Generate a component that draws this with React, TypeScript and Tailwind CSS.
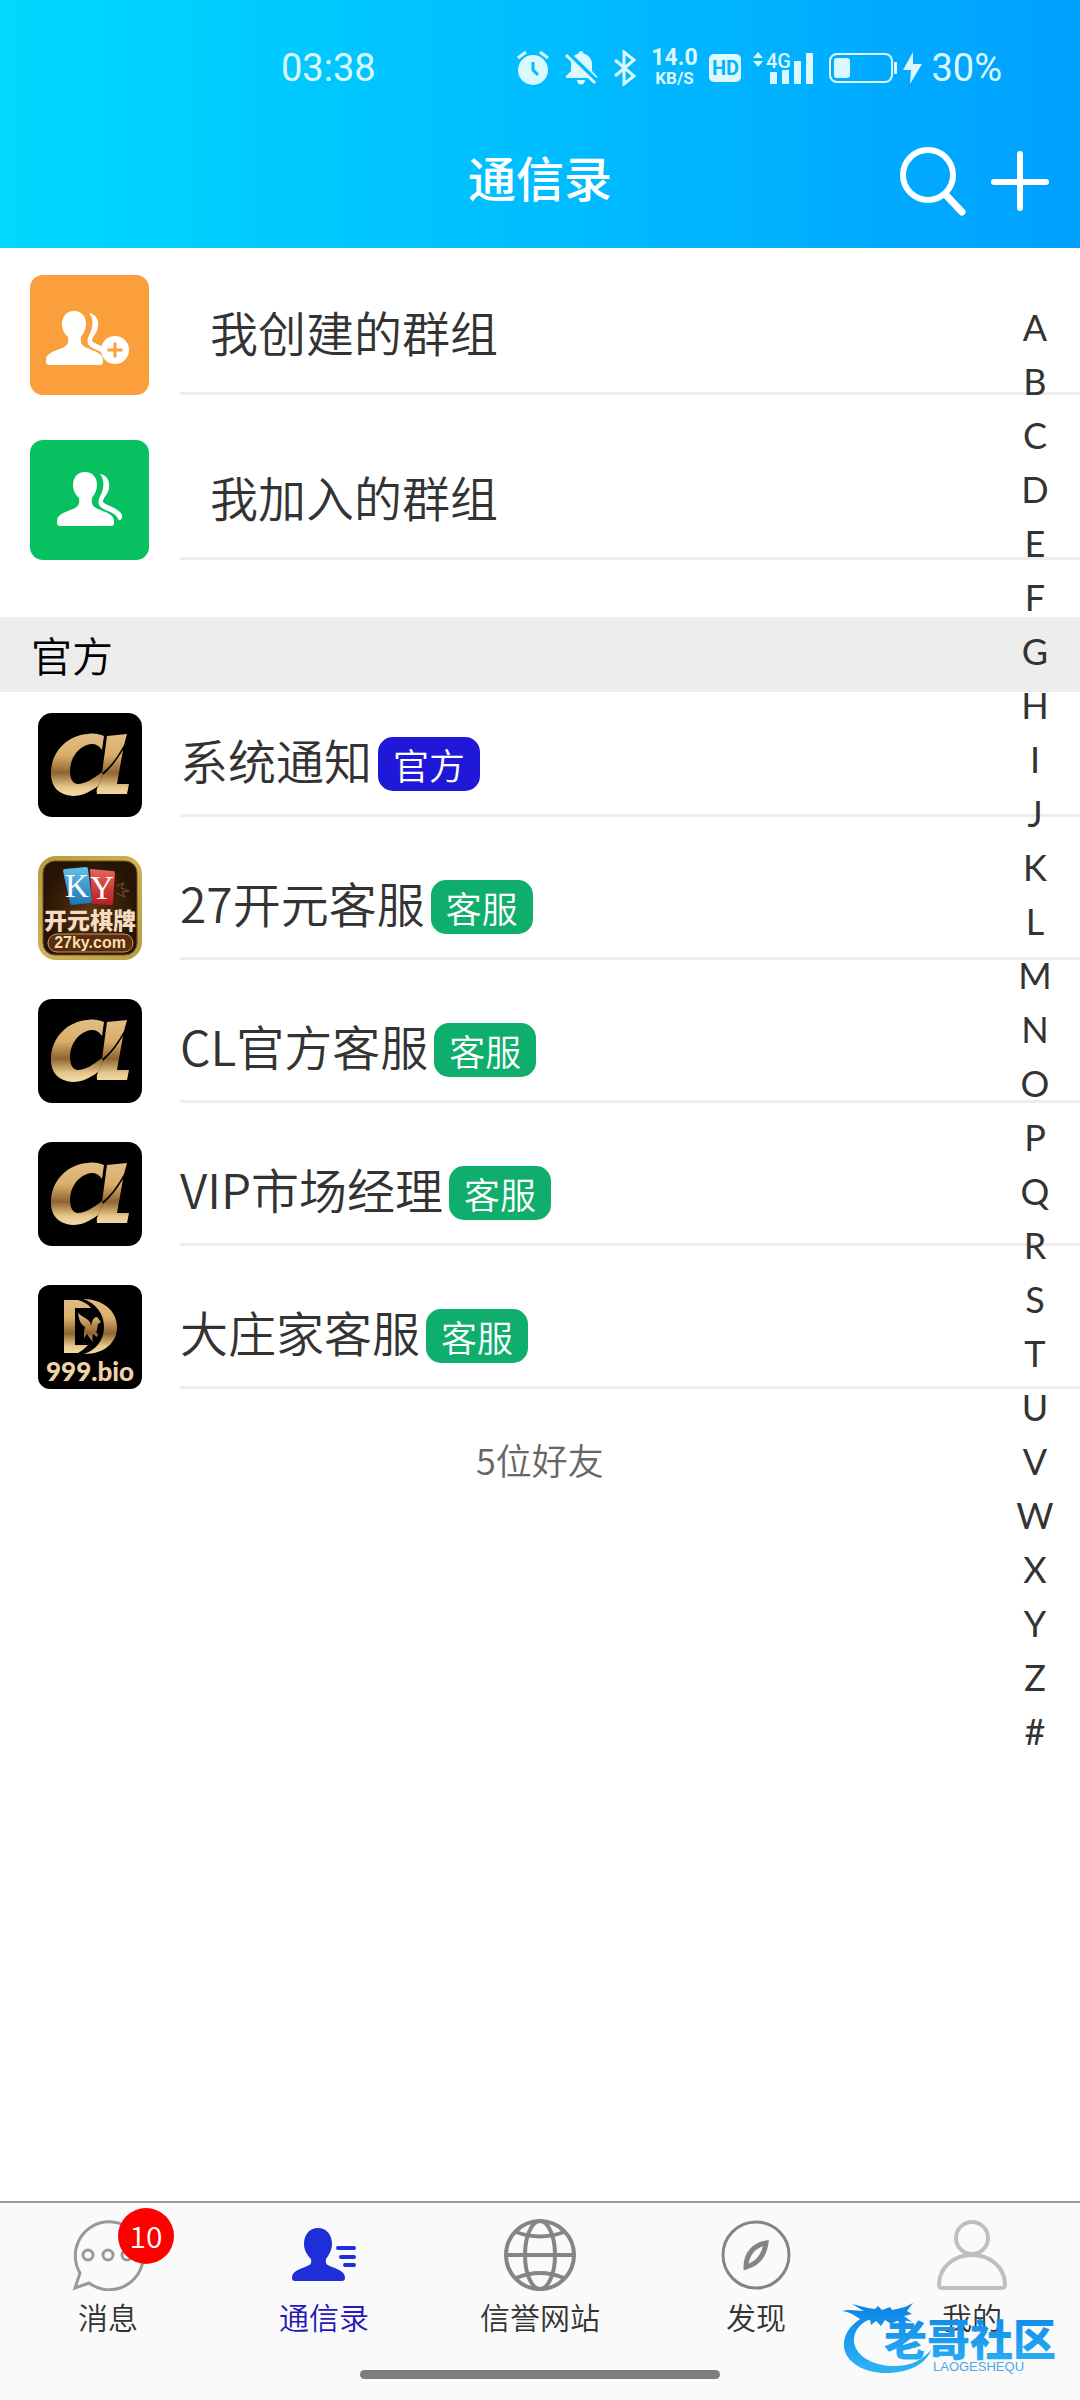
import type { ReactNode } from 'react';

const INDEX_LETTERS = 'ABCDEFGHIJKLMNOPQRSTUVWXYZ#'.split('');

interface Contact {
  id: string;
  name: string;
  tag: string;
  official?: boolean;
  avatar: ReactNode;
}

function StatusBar() {
  return (
    <div className="flex h-[136px] items-center justify-between pr-[78px] pl-[281px] font-[Roboto,sans-serif] font-normal text-[#dcf8ff]">
      <span className="text-[38px] leading-none">03:38</span>
      <div className="flex items-center gap-3">
        {/* alarm */}
        <svg width="38" height="36" viewBox="0 0 38 36" fill="none">
          <circle cx="19" cy="20" r="15" fill="currentColor" />
          <path d="M4 8l8-6M34 8l-8-6" stroke="currentColor" strokeWidth="3" />
          <path d="M19 12v8l5 5" stroke="#00bdff" strokeWidth="3" />
        </svg>
        {/* muted bell */}
        <svg width="35" height="36" viewBox="0 0 35 36" fill="none">
          <path
            d="M17 1c1.500 0 2.500 1 2.500 2.500C25 5 28 9 28 14v7l5 5v2H2v-2l5-5v-7c0-5 2-9 7.500-10.500C14.500 2 15.500 1 17 1zM13 30h8c0 3-2 4.500-4 4.500S13 33 13 30z"
            fill="currentColor"
          />
          <path d="M4 3l30 29" stroke="#00bbff" strokeWidth="4" />
          <path d="M2 5l29 28" stroke="currentColor" strokeWidth="3" />
        </svg>
        {/* bluetooth */}
        <svg width="28" height="36" viewBox="0 0 28 36" fill="none" stroke="currentColor" strokeWidth="3">
          <path d="M4 10l19 16-10 8V2l10 8L4 26" />
        </svg>
        <div className="flex w-[46px] flex-col items-center font-bold">
          <span className="text-[23px] leading-[20px]">14.0</span>
          <span className="text-[17px] leading-[20px]">KB/S</span>
        </div>
        <span className="flex h-7 w-8 items-center justify-center rounded-[5px] bg-[#dcf8ff] text-[20px] leading-none font-bold text-[#00b2ff]">
          HD
        </span>
        {/* mobile signal */}
        <svg width="62" height="36" viewBox="0 0 62 36" fill="currentColor" className="overflow-visible">
          <path d="M0 8l5-6 5 6zM0 11l5 6 5-6zM17 22h7v12h-7zM29 20h7v14h-7zM41 11h7v23h-7zM53 3h7v31h-7z" />
          <text x="13" y="18" fontSize="20" fontWeight="500">
            4G
          </text>
        </svg>
        <div className="flex items-center gap-2">
          {/* battery */}
          <svg width="96" height="36" viewBox="0 0 96 36" fill="none">
            <rect x="3" y="4" width="62" height="28" rx="7" stroke="currentColor" strokeWidth="2" />
            <rect x="7" y="8" width="16" height="20" rx="3" fill="currentColor" />
            <path d="M67 12h3v12h-3z" fill="currentColor" />
            <path d="M86 2L76 20h8l-1 14 12-20h-9z" fill="currentColor" />
          </svg>
          <span className="text-[38px] leading-none">30%</span>
        </div>
      </div>
    </div>
  );
}

function Header() {
  return (
    <header className="bg-linear-to-r from-[#00d8ff] via-[#00bdff] to-[#00a0ff] pb-6">
      <StatusBar />
      <div className="grid h-[88px] grid-cols-[1fr_auto_1fr] items-center px-7 text-white">
        <span />
        <h1 className="pb-2 text-[48px] leading-none font-medium">通信录</h1>
        <div className="flex items-center justify-end gap-4">
          <button type="button" aria-label="搜索">
            <svg width="72" height="72" viewBox="0 0 72 72" fill="none" stroke="currentColor" strokeWidth="6" strokeLinecap="round">
              <circle cx="28" cy="31" r="25" />
              <path d="M45 50l17 18" strokeWidth="7" />
            </svg>
          </button>
          <button type="button" aria-label="添加">
            <svg width="64" height="64" viewBox="0 0 64 64" fill="none" stroke="currentColor" strokeWidth="6" strokeLinecap="round">
              <path d="M32 6v54M6 34h52" />
            </svg>
          </button>
        </div>
      </div>
    </header>
  );
}

function PeopleShape() {
  return (
    <>
      <path d="M44 36c8 0 12 6 12 13 0 6-3 10-5 13-1 6 1 9 6 11 7 3 16 5 16 12v2c0 2-1 3-3 3H19c-2 0-3-1-3-3v-2c0-7 9-9 16-12 5-2 7-5 6-11-3-3-6-7-6-13 0-7 4-13 12-13z" />
      <path d="M59 38c7 1 10 7 9 14-1 7-6 9-6 14 4 4 16 6 19 13 1 4-2 7-4 4-3-8-16-8-19-14-2-6 3-10 4-17 1-6 0-10-3-14z" />
    </>
  );
}

function CreatedGroupIcon() {
  return (
    <svg width="119" height="120" viewBox="0 0 119 120" fill="#fff" className="shrink-0 rounded-[13px] bg-[#fa9f3c]">
      <PeopleShape />
      <circle cx="85" cy="75" r="14" />
      <path d="M77.500 75h15M85 67.500v15" stroke="#fa9f3c" strokeWidth="3" />
    </svg>
  );
}

function JoinedGroupIcon() {
  return (
    <svg width="119" height="120" viewBox="0 0 119 120" fill="#fff" className="shrink-0 rounded-[13px] bg-[#07c160]">
      <g transform="translate(11 -4)">
        <PeopleShape />
      </g>
    </svg>
  );
}

function GoldStops() {
  return (
    <>
      <stop offset="0" stopColor="#e2bd86" />
      <stop offset="0.350" stopColor="#d9ae6a" />
      <stop offset="0.620" stopColor="#8e6430" />
      <stop offset="0.850" stopColor="#e8c98b" />
      <stop offset="1" stopColor="#f3dfb3" />
    </>
  );
}

function AlphaAvatar({ id }: { id: string }) {
  return (
    <svg width="104" height="104" viewBox="0 0 104 104" className="shrink-0 rounded-[14px] bg-black">
      <defs>
        <linearGradient id={id} gradientUnits="userSpaceOnUse" x1="0" y1="20" x2="0" y2="84">
          <GoldStops />
        </linearGradient>
      </defs>
      <g fill={`url(#${id})`}>
        <path d="M66 23l-2 14c-4-6-9-7-15-5-11 4-17 15-17 26 0 8 3 13 8 13 7 0 15-5 24-12l1 3-5 11c-8 6-16 10-25 10-15-1-23-10-22-25 1-20 17-36 37-37 6-1 11 0 16 2z" />
        <path d="M69 23l20-2-3 11c-6 11-13 21-22 28z" />
        <path d="M85 37l-6 34h12l-2 10H59q-1-4 1-8l5-11c8-7 14-15 20-25z" />
      </g>
    </svg>
  );
}

function KaiyuanAvatar() {
  return (
    <svg width="104" height="104" viewBox="0 0 104 104" className="shrink-0 rounded-[18px]">
      <defs>
        <linearGradient id="ky-frame" x1="0" y1="0" x2="1" y2="1">
          <stop offset="0" stopColor="#b39a3c" />
          <stop offset="0.500" stopColor="#cdb257" />
          <stop offset="1" stopColor="#b89b45" />
        </linearGradient>
        <radialGradient id="ky-ground">
          <stop offset="0" stopColor="#5d3510" />
          <stop offset="1" stopColor="#251405" />
        </radialGradient>
        <linearGradient id="ky-blue" x1="0" y1="0" x2="0" y2="1">
          <stop offset="0" stopColor="#63bfe9" />
          <stop offset="1" stopColor="#1975b5" />
        </linearGradient>
        <linearGradient id="ky-red" x1="0" y1="0" x2="0" y2="1">
          <stop offset="0" stopColor="#e4655c" />
          <stop offset="1" stopColor="#b81d20" />
        </linearGradient>
      </defs>
      <rect width="104" height="104" fill="url(#ky-frame)" />
      <rect x="5" y="5" width="94" height="94" rx="12" fill="url(#ky-ground)" stroke="#6d5319" />
      <path d="M78 30l8-3-3 5 8 3-7 1 3 5-9-4" fill="none" stroke="#7b5430" />
      <path d="M52 13l23 2q2 0 2 2l-2 30q0 2-2 2l-19-1z" fill="url(#ky-red)" />
      <path d="M27 13l21-2q2 0 2 2l4 32q0 2-2 2l-18 2q-2 0-2-2L25 15q0-2 2-2z" fill="url(#ky-blue)" />
      <g fill="#fff" fontFamily="Liberation Serif, serif" fontWeight="400" fontSize="33" textAnchor="middle">
        <text x="39" y="41">
          K
        </text>
        <text x="64" y="43">
          Y
        </text>
      </g>
      <text x="52" y="73" textAnchor="middle" fontSize="23" fontWeight="900" fill="#f5dcc0">
        开元棋牌
      </text>
      <rect x="10" y="78" width="85" height="18" rx="9" fill="#5a2d0e" stroke="#c69a62" />
      <text x="52" y="92" textAnchor="middle" fontFamily="Liberation Sans, sans-serif" fontSize="16" fontWeight="700" fill="#f8dfae">
        27ky.com
      </text>
    </svg>
  );
}

function PegasusAvatar() {
  return (
    <svg width="104" height="104" viewBox="0 0 104 104" className="shrink-0 rounded-[12px] bg-black">
      <defs>
        <linearGradient id="pegasus" gradientUnits="userSpaceOnUse" x1="0" y1="13" x2="0" y2="70">
          <GoldStops />
        </linearGradient>
      </defs>
      <g fill="url(#pegasus)">
        <path d="M26 15h14c6 2 10 4 13 8H37v37h13c-3 3-6 6-10 8H26z" />
        <path d="M45 14c20 0 34 12 34 28S66 69 46 69c12-4 20-14 20-27S58 18 45 14z" />
        <path d="M40 28c4 4 9 5 12 9l1 4c1-6 3-9 6-9l4 5-3 2c-1 3 0 5-2 8l2 2-1 3-4-3c-1 3-1 5 0 8l-4-5-2-3-3 4v-6l1-5c-5-3-6-8-7-14z" />
      </g>
      <text x="52" y="96" textAnchor="middle" fontFamily="Lato, sans-serif" fontSize="26" fontWeight="900" fill="#efd2a8">
        999.bio
      </text>
    </svg>
  );
}

const contacts: Contact[] = [
  { id: 'system', name: '系统通知', tag: '官方', official: true, avatar: <AlphaAvatar id="alpha-system" /> },
  { id: 'kaiyuan', name: '27开元客服', tag: '客服', avatar: <KaiyuanAvatar /> },
  { id: 'cl', name: 'CL官方客服', tag: '客服', avatar: <AlphaAvatar id="alpha-cl" /> },
  { id: 'vip', name: 'VIP市场经理', tag: '客服', avatar: <AlphaAvatar id="alpha-vip" /> },
  { id: 'dealer', name: '大庄家客服', tag: '客服', avatar: <PegasusAvatar /> },
];

const groups = [
  { label: '我创建的群组', icon: <CreatedGroupIcon /> },
  { label: '我加入的群组', icon: <JoinedGroupIcon /> },
];

const tabs = [
  {
    label: '消息',
    badge: 10,
    icon: (
      <g stroke="#999" strokeWidth="3">
        <path d="M17 64L3 69l5-15A34 34 0 1 1 17 64z" />
        <circle cx="16" cy="36" r="5" />
        <circle cx="36" cy="36" r="5" />
        <circle cx="55" cy="36" r="5" />
      </g>
    ),
  },
  {
    label: '通信录',
    active: true,
    icon: (
      <g fill="#1f2fd8">
        <path d="M30 9c9 0 14 7 14 16 0 6-3 11-6 15-1 5 1 6 6 8 8 3 13 5 13 11 0 2-1 3-3 3H7c-2 0-3-1-3-3 0-6 5-8 13-11 5-2 7-3 6-8-4-4-7-9-7-15 0-9 5-16 14-16z" />
        <path d="M50 29h16M53 38h13M57 46h9" stroke="#1f2fd8" strokeWidth="4" strokeLinecap="round" />
      </g>
    ),
  },
  {
    label: '信誉网站',
    icon: (
      <g stroke="#858585" strokeWidth="4">
        <circle cx="36" cy="36" r="34" />
        <ellipse cx="36" cy="36" rx="15" ry="34" />
        <path d="M2 36h68M12 13q24 9 48 0M12 59q24-10 48 0" />
      </g>
    ),
  },
  {
    label: '发现',
    icon: (
      <g stroke="#858585" strokeWidth="3">
        <circle cx="36" cy="36" r="33" />
        <path d="M46 24c-11 2-20 10-20 24 11-3 18-10 20-24z" strokeWidth="5" />
      </g>
    ),
  },
  {
    label: '我的',
    icon: (
      <g stroke="#bfbfbf" strokeWidth="4">
        <circle cx="36" cy="19" r="16" />
        <path d="M3 66c0-18 15-30 33-30s33 12 33 30q0 3-3 3H6q-3 0-3-3z" />
      </g>
    ),
  },
];

function ContactList() {
  return (
    <ul className="flex flex-col gap-[39px] pt-[21px]">
      {contacts.map((contact) => (
        <li key={contact.id}>
          <a href={`#${contact.id}`} className="flex h-[104px] pl-[38px]">
            {contact.avatar}
            <span className="ml-[38px] flex flex-1 items-center gap-[6px] border-b-[3px] border-[#eee]">
              <span className="pb-2.5 text-[48px] leading-[60px]">{contact.name}</span>
              <span
                className={`rounded-[15px] px-[15px] text-[36px] leading-[54px] text-white ${
                  contact.official ? 'bg-[#2018d8]' : 'bg-[#0fae6c]'
                }`}
              >
                {contact.tag}
              </span>
            </span>
          </a>
        </li>
      ))}
    </ul>
  );
}

function LetterIndex() {
  return (
    <nav
      aria-label="索引"
      className="absolute top-[52px] right-0 flex w-[90px] flex-col text-center font-[Lato,'Noto_Sans_CJK_SC',sans-serif] font-normal"
    >
      {INDEX_LETTERS.map((letter) => (
        <a key={letter} href={`#${letter}`} className="text-[36px] leading-[54px]">
          {letter}
        </a>
      ))}
    </nav>
  );
}

function Watermark() {
  return (
    <svg width="224" height="84" viewBox="0 0 224 84" aria-hidden="true" className="pointer-events-none absolute right-[14px] bottom-[22px]">
      <defs>
        <linearGradient id="dragon" gradientUnits="userSpaceOnUse" x1="0" y1="10" x2="0" y2="80">
          <stop offset="0" stopColor="#0b84e6" />
          <stop offset="1" stopColor="#2fb4f6" />
        </linearGradient>
      </defs>
      <g fill="url(#dragon)">
        <path d="M30 19C12 26 1 38 2 53c2 17 23 27 45 26 21-1 37-9 42-23-9 11-23 17-40 16-19-1-35-10-37-24-1-12 8-21 21-25z" />
        <path d="M0 17c8-2 14 0 22 0l-12-7 16 4 7 1 3-3 4 4 8-3 2 3 13-3 8-4-6 8 5 3-8 2 8 6-9-2 3 5-9-4-6 3-6-4-4 6-5-5-5 4-1-5-7 1C14 22 8 18 0 17z" />
      </g>
      <text x="42" y="62" fontSize="43" fontWeight="900" fill="url(#dragon)">
        老哥社区
      </text>
      <text x="91" y="77" fontFamily="Liberation Sans, sans-serif" fontSize="13" fill="#4fa6e8">
        LAOGESHEQU
      </text>
    </svg>
  );
}

function TabBar() {
  return (
    <footer className="relative border-t-2 border-[#999] bg-[#fafafa] pt-4 pb-[21px]">
      <nav className="grid grid-cols-5">
        {tabs.map((tab) => (
          <a
            key={tab.label}
            href={`#${tab.label}`}
            className={`flex flex-col items-center gap-[3px] ${tab.active ? 'text-[#2418b8]' : 'text-[#333]'}`}
          >
            <span className="relative">
              <svg width="72" height="72" viewBox="0 0 72 72" fill="none">
                {tab.icon}
              </svg>
              {tab.badge && (
                <span className="absolute -top-[11px] left-[46px] h-14 w-14 rounded-full bg-[#f00] text-center text-[30px] leading-[54px] text-white">
                  {tab.badge}
                </span>
              )}
            </span>
            <span className="text-[30px] leading-[44px]">{tab.label}</span>
          </a>
        ))}
      </nav>
      <div className="mx-auto mt-8 h-[9px] w-1/3 rounded-full bg-[#7d7d7d]" />
      <Watermark />
    </footer>
  );
}

export default function App() {
  return (
    <div className="flex min-h-screen flex-col bg-white font-['Noto_Sans_CJK_SC',sans-serif] font-[350] text-[#333]">
      <Header />
      <main className="relative flex-1">
        <ul className="flex flex-col gap-[45px] pt-[27px] pb-[57px]">
          {groups.map((group) => (
            <li key={group.label}>
              <a href={`#${group.label}`} className="flex h-[120px] pl-[30px]">
                {group.icon}
                <span className="ml-[31px] flex flex-1 items-center border-b-[3px] border-[#eee] pb-1.5 pl-[30px] text-[48px]">
                  {group.label}
                </span>
              </a>
            </li>
          ))}
        </ul>
        <h2 className="bg-[#ededed] pl-[31px] text-[41px] leading-[75px] text-black">官方</h2>
        <ContactList />
        <p className="pt-[43px] text-center text-[36px] leading-[54px] text-[#666]">5位好友</p>
        <LetterIndex />
      </main>
      <TabBar />
    </div>
  );
}
